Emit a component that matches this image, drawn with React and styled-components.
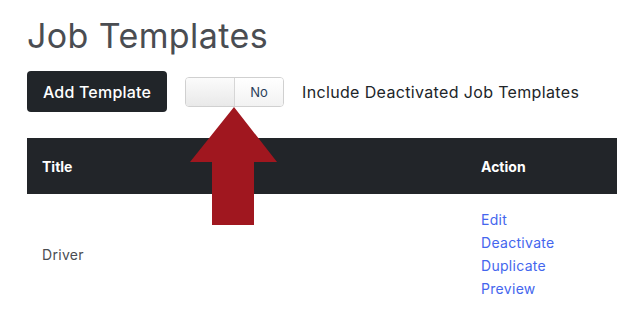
import React from 'react';
import styled, { createGlobalStyle } from 'styled-components';

const GlobalStyle = createGlobalStyle`
  html, body {
    margin: 0;
    padding: 0;
    background: #fff;
    overflow: hidden;
  }
  body {
    font-family: Inter, "Noto Sans", sans-serif;
    color: #212529;
  }
`;

const Page = styled.div`
  position: relative;
  width: 617px;
  height: 309px;
  padding: 14px 0 0 27px;
  box-sizing: border-box;
`;

const Heading = styled.h1`
  margin: 0;
  font-size: 34px;
  font-weight: 400;
  color: #4a4d52;
  line-height: 44px;
  letter-spacing: 0.4px;
`;

const Toolbar = styled.div`
  display: flex;
  align-items: center;
  margin-top: 13px;
  height: 41px;
`;

const Button = styled.button`
  height: 41px;
  width: 140px;
  border: none;
  border-radius: 4px;
  background: #212529;
  color: #fff;
  font-family: inherit;
  font-size: 16px;
  font-weight: 500;
  letter-spacing: 0.2px;
`;

const Toggle = styled.div`
  display: flex;
  margin-left: 18px;
  width: 99px;
  height: 30px;
  border: 1px solid #d0d0d0;
  border-radius: 4px;
  box-sizing: border-box;
  overflow: hidden;
`;

const ToggleHalf = styled.div`
  flex: 1;
  display: flex;
  align-items: center;
  justify-content: center;
  font-size: 13px;
  color: #2a3f5a;
  background: ${(p) => (p.$off ? 'linear-gradient(#fbfbfb, #e9e9e9)' : 'linear-gradient(#ffffff, #f2f2f2)')};
  border-right: ${(p) => (p.$off ? '1px solid #d6d6d6' : 'none')};
`;

const Label = styled.span`
  margin-left: 18px;
  font-size: 16px;
  color: #212529;
  letter-spacing: 0.35px;
`;

const Table = styled.table`
  margin-top: 26px;
  width: 590px;
  table-layout: fixed;
  border-collapse: collapse;
`;

const HeadCell = styled.th`
  background: #222529;
  color: #fff;
  text-align: left;
  font-size: 14px;
  font-weight: 700;
  height: 56px;
  padding: 0 15px;
  width: ${(p) => p.$w || 'auto'};
`;

const Cell = styled.td`
  padding: 14px 15px;
  font-size: 14px;
  color: #4a4d52;
  letter-spacing: 0.3px;
  vertical-align: middle;
`;

const Links = styled.div`
  display: flex;
  flex-direction: column;
`;

const Link = styled.a`
  color: #4466ee;
  font-size: 14px;
  line-height: 23px;
  letter-spacing: 0.3px;
  text-decoration: none;
`;

const Arrow = styled.svg`
  position: absolute;
  left: 0;
  top: 0;
  pointer-events: none;
`;

function App() {
  return (
    <>
      <GlobalStyle />
      <Page>
        <Heading>Job Templates</Heading>
        <Toolbar>
          <Button>Add Template</Button>
          <Toggle>
            <ToggleHalf $off />
            <ToggleHalf>No</ToggleHalf>
          </Toggle>
          <Label>Include Deactivated Job Templates</Label>
        </Toolbar>
        <Table>
          <thead>
            <tr>
              <HeadCell $w="409px">Title</HeadCell>
              <HeadCell>Action</HeadCell>
            </tr>
          </thead>
          <tbody>
            <tr>
              <Cell>Driver</Cell>
              <Cell>
                <Links>
                  <Link href="#">Edit</Link>
                  <Link href="#">Deactivate</Link>
                  <Link href="#">Duplicate</Link>
                  <Link href="#">Preview</Link>
                </Links>
              </Cell>
            </tr>
          </tbody>
        </Table>
        <Arrow width="617" height="309" viewBox="0 0 617 309">
          <polygon
            points="234,107 277,162 254,162 254,225 212,225 212,162 190,162"
            fill="#a0171f"
          />
        </Arrow>
      </Page>
    </>
  );
}

export default App;
